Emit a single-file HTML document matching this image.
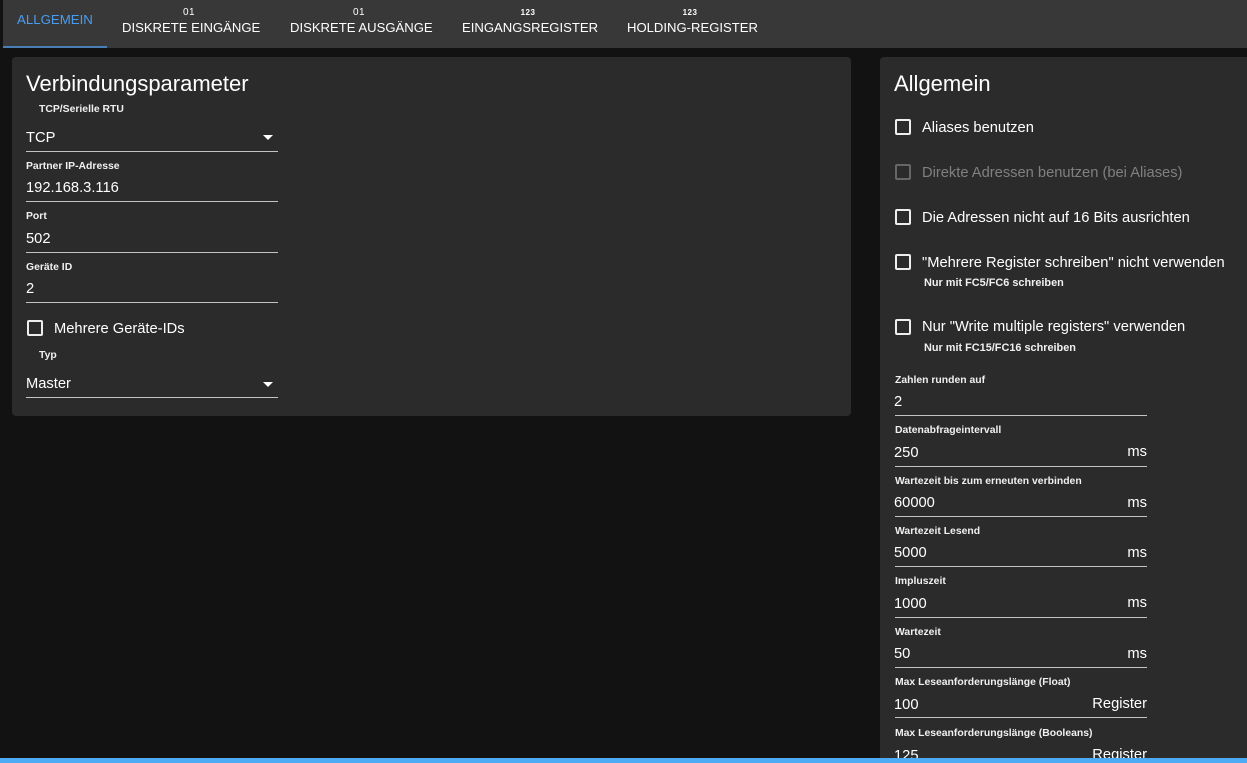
<!DOCTYPE html>
<html><head><meta charset="utf-8"><style>
html,body{margin:0;padding:0;background:#121212;width:1247px;height:763px;overflow:hidden}
body{position:relative;font-family:"Liberation Sans",sans-serif;color:#fff}
.a{position:absolute;white-space:nowrap;line-height:1}
.tab{font-size:13.1px;text-transform:uppercase}
.n{font-size:10px;letter-spacing:.5px;transform:translateX(-50%)}
.l{font-size:10.4px;font-weight:bold;color:#f0f0f0;margin-top:2px}
.v{font-size:14.7px;margin-top:1px}
.t{font-size:22px}
.u{position:absolute;height:1px;background:#c4c4c4}
.p{position:absolute;background:#2b2b2b;border-radius:4px}
.c{position:absolute;width:12px;height:12px;border:2px solid #fff;border-radius:2px;opacity:.92}
.s{font-size:10.9px;font-weight:bold;color:#f0f0f0;margin-top:1px}
.r{text-align:right}
.ar{position:absolute;width:0;height:0;border-left:5px solid transparent;border-right:5px solid transparent;border-top:5px solid #fff}
</style></head><body>
<div style="position:absolute;left:3px;top:0;width:1244px;height:48px;background:#383838"></div>
<div style="position:absolute;left:3px;top:46px;width:104px;height:2px;background:#4a7fb5"></div>
<div class="a tab" style="left:17px;top:13px;color:#4a9cf0;font-size:13.25px">Allgemein</div>
<div class="a n" style="left:189px;top:8px">01</div>
<div class="a tab" style="left:122px;top:21px">Diskrete Eingänge</div>
<div class="a n" style="left:359px;top:8px">01</div>
<div class="a tab" style="left:290px;top:21px">Diskrete Ausgänge</div>
<div class="a n" style="left:528px;top:9px;font-size:8px;font-weight:bold">123</div>
<div class="a tab" style="left:462px;top:21px">Eingangsregister</div>
<div class="a n" style="left:690px;top:9px;font-size:8px;font-weight:bold">123</div>
<div class="a tab" style="left:627px;top:21px">Holding-Register</div>

<div class="p" style="left:12px;top:57px;width:839px;height:359px"></div>
<div class="a t" style="left:26px;top:73px">Verbindungsparameter</div>
<div class="a l" style="left:39px;top:103px">TCP/Serielle RTU</div>
<div class="a v" style="left:26px;top:130px">TCP</div>
<div class="ar" style="left:263px;top:135px"></div>
<div class="u" style="left:26px;top:151px;width:252px"></div>
<div class="a l" style="left:26px;top:160px">Partner IP-Adresse</div>
<div class="a v" style="left:26px;top:180px">192.168.3.116</div>
<div class="u" style="left:26px;top:201px;width:252px"></div>
<div class="a l" style="left:26px;top:210px">Port</div>
<div class="a v" style="left:26px;top:231px">502</div>
<div class="u" style="left:26px;top:252px;width:252px"></div>
<div class="a l" style="left:26px;top:261px">Geräte ID</div>
<div class="a v" style="left:26px;top:281px">2</div>
<div class="u" style="left:26px;top:302px;width:252px"></div>
<div class="c" style="left:27px;top:320px"></div>
<div class="a v" style="left:54px;top:321px">Mehrere Geräte-IDs</div>
<div class="a l" style="left:39px;top:349px">Typ</div>
<div class="a v" style="left:26px;top:376px">Master</div>
<div class="ar" style="left:263px;top:382px"></div>
<div class="u" style="left:26px;top:397px;width:252px"></div>

<div class="p" style="left:880px;top:57px;width:367px;height:706px;border-radius:4px 0 0 0"></div>
<div class="a t" style="left:894px;top:73px">Allgemein</div>
<div class="c" style="left:895px;top:119px"></div>
<div class="a v" style="left:922px;top:120px">Aliases benutzen</div>
<div class="c" style="left:895px;top:164px;border-color:#666;opacity:1"></div>
<div class="a v" style="left:922px;top:165px;color:#808080">Direkte Adressen benutzen (bei Aliases)</div>
<div class="c" style="left:895px;top:209px"></div>
<div class="a v" style="left:922px;top:210px">Die Adressen nicht auf 16 Bits ausrichten</div>
<div class="c" style="left:895px;top:254px"></div>
<div class="a v" style="left:922px;top:255px">"Mehrere Register schreiben" nicht verwenden</div>
<div class="a s" style="left:924px;top:277px">Nur mit FC5/FC6 schreiben</div>
<div class="c" style="left:895px;top:319px"></div>
<div class="a v" style="left:922px;top:319px">Nur "Write multiple registers" verwenden</div>
<div class="a s" style="left:924px;top:342px">Nur mit FC15/FC16 schreiben</div>

<div class="a l" style="left:895px;top:374px">Zahlen runden auf</div>
<div class="a v" style="left:894px;top:394px">2</div>
<div class="u" style="left:895px;top:415px;width:252px"></div>

<div class="a l" style="left:895px;top:424px">Datenabfrageintervall</div>
<div class="a v" style="left:894px;top:445px">250</div>
<div class="a v" style="right:100px;top:444px">ms</div>
<div class="u" style="left:895px;top:466px;width:252px"></div>

<div class="a l" style="left:895px;top:475px">Wartezeit bis zum erneuten verbinden</div>
<div class="a v" style="left:894px;top:495px">60000</div>
<div class="a v" style="right:100px;top:495px">ms</div>
<div class="u" style="left:895px;top:516px;width:252px"></div>

<div class="a l" style="left:895px;top:525px">Wartezeit Lesend</div>
<div class="a v" style="left:894px;top:545px">5000</div>
<div class="a v" style="right:100px;top:545px">ms</div>
<div class="u" style="left:895px;top:566px;width:252px"></div>

<div class="a l" style="left:895px;top:575px">Impluszeit</div>
<div class="a v" style="left:894px;top:596px">1000</div>
<div class="a v" style="right:100px;top:595px">ms</div>
<div class="u" style="left:895px;top:617px;width:252px"></div>

<div class="a l" style="left:895px;top:626px">Wartezeit</div>
<div class="a v" style="left:894px;top:646px">50</div>
<div class="a v" style="right:100px;top:646px">ms</div>
<div class="u" style="left:895px;top:667px;width:252px"></div>

<div class="a l" style="left:895px;top:676px">Max Leseanforderungslänge (Float)</div>
<div class="a v" style="left:894px;top:697px">100</div>
<div class="a v" style="right:100px;top:696px">Register</div>
<div class="u" style="left:895px;top:717px;width:252px"></div>

<div class="a l" style="left:895px;top:727px">Max Leseanforderungslänge (Booleans)</div>
<div class="a v" style="left:894px;top:748px">125</div>
<div class="a v" style="right:100px;top:747px">Register</div>

<div style="position:absolute;left:0;top:758px;width:1247px;height:5px;background:#4dabf5"></div>
</body></html>
